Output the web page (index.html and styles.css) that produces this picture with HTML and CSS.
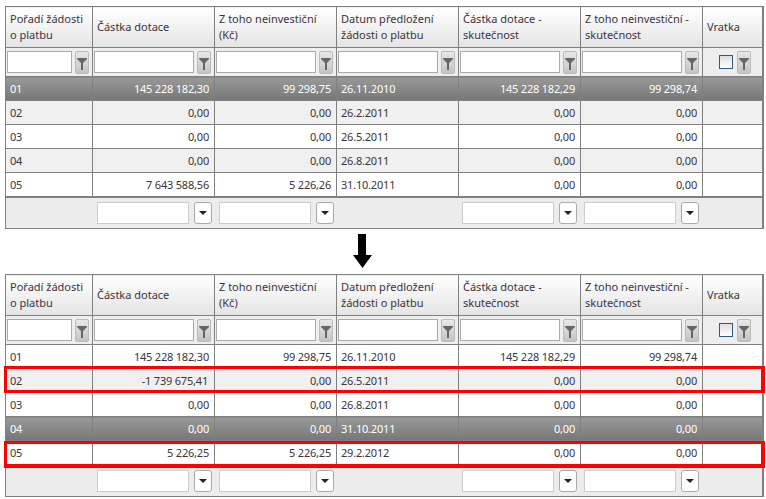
FILE: index.html
```html
<!DOCTYPE HTML>
<html lang=cs>
	<head>
		<meta charset="UTF-8">
		<title>Žádosti o platbu</title>
		<link rel="stylesheet" href="styles.css">
	</head>
	<body>
		<table class="grid">
			<colgroup><col class=c1><col class=c2><col class=c2><col class=c2><col class=c2><col class=c2><col class=c7></colgroup>
			<thead>
				<tr>
					<th>Pořadí žádosti o platbu</th>
					<th>Částka dotace</th>
					<th>Z toho neinvestiční (Kč)</th>
					<th>Datum předložení žádosti o platbu</th>
					<th>Částka dotace - skutečnost</th>
					<th>Z toho neinvestiční - skutečnost</th>
					<th>Vratka</th>
				</tr>
				<tr class="filters">
					<td><div class=filter><input><button class=funnel><svg viewBox="0 0 12 21"><path d="M1 6h10v1L7 11v7H5v-7L1 7z"/></svg></button></div></td>
					<td><div class=filter><input><button class=funnel><svg viewBox="0 0 12 21"><path d="M1 6h10v1L7 11v7H5v-7L1 7z"/></svg></button></div></td>
					<td><div class=filter><input><button class=funnel><svg viewBox="0 0 12 21"><path d="M1 6h10v1L7 11v7H5v-7L1 7z"/></svg></button></div></td>
					<td><div class=filter><input><button class=funnel><svg viewBox="0 0 12 21"><path d="M1 6h10v1L7 11v7H5v-7L1 7z"/></svg></button></div></td>
					<td><div class=filter><input><button class=funnel><svg viewBox="0 0 12 21"><path d="M1 6h10v1L7 11v7H5v-7L1 7z"/></svg></button></div></td>
					<td><div class=filter><input><button class=funnel><svg viewBox="0 0 12 21"><path d="M1 6h10v1L7 11v7H5v-7L1 7z"/></svg></button></div></td>
					<td><div class="filter center"><span class=check></span><button class=funnel><svg viewBox="0 0 12 21"><path d="M1 6h10v1L7 11v7H5v-7L1 7z"/></svg></button></div></td>
				</tr>
			</thead>
			<tbody>
				<tr class=selected><td>01</td><td>145 228 182,30</td><td>99 298,75</td><td>26.11.2010</td><td>145 228 182,29</td><td>99 298,74</td><td></td></tr>
				<tr class=alt><td>02</td><td>0,00</td><td>0,00</td><td>26.2.2011</td><td>0,00</td><td>0,00</td><td></td></tr>
				<tr><td>03</td><td>0,00</td><td>0,00</td><td>26.5.2011</td><td>0,00</td><td>0,00</td><td></td></tr>
				<tr class=alt><td>04</td><td>0,00</td><td>0,00</td><td>26.8.2011</td><td>0,00</td><td>0,00</td><td></td></tr>
				<tr><td>05</td><td>7 643 588,56</td><td>5 226,26</td><td>31.10.2011</td><td>0,00</td><td>0,00</td><td></td></tr>
			</tbody>
			<tfoot>
				<tr>
					<td></td>
					<td><div class=combo><input><button class=drop><i></i></button></div></td>
					<td><div class=combo><input><button class=drop><i></i></button></div></td>
					<td></td>
					<td><div class="combo tight"><input><button class=drop><i></i></button></div></td>
					<td><div class="combo tight"><input><button class=drop><i></i></button></div></td>
					<td></td>
				</tr>
			</tfoot>
		</table>

		<div class="arrow">
			<svg width=19 height=34 viewBox="0 0 19 34"><path d="M5 0h8v21h6l-9.500 13L0 21h5z"/></svg>
		</div>

		<div class="after">
			<table class="grid">
				<colgroup><col class=c1><col class=c2><col class=c2><col class=c2><col class=c2><col class=c2><col class=c7></colgroup>
				<thead>
					<tr>
						<th>Pořadí žádosti o platbu</th>
						<th>Částka dotace</th>
						<th>Z toho neinvestiční (Kč)</th>
						<th>Datum předložení žádosti o platbu</th>
						<th>Částka dotace - skutečnost</th>
						<th>Z toho neinvestiční - skutečnost</th>
						<th>Vratka</th>
					</tr>
					<tr class="filters">
						<td><div class=filter><input><button class=funnel><svg viewBox="0 0 12 21"><path d="M1 6h10v1L7 11v7H5v-7L1 7z"/></svg></button></div></td>
						<td><div class=filter><input><button class=funnel><svg viewBox="0 0 12 21"><path d="M1 6h10v1L7 11v7H5v-7L1 7z"/></svg></button></div></td>
						<td><div class=filter><input><button class=funnel><svg viewBox="0 0 12 21"><path d="M1 6h10v1L7 11v7H5v-7L1 7z"/></svg></button></div></td>
						<td><div class=filter><input><button class=funnel><svg viewBox="0 0 12 21"><path d="M1 6h10v1L7 11v7H5v-7L1 7z"/></svg></button></div></td>
						<td><div class=filter><input><button class=funnel><svg viewBox="0 0 12 21"><path d="M1 6h10v1L7 11v7H5v-7L1 7z"/></svg></button></div></td>
						<td><div class=filter><input><button class=funnel><svg viewBox="0 0 12 21"><path d="M1 6h10v1L7 11v7H5v-7L1 7z"/></svg></button></div></td>
						<td><div class="filter center"><span class=check></span><button class=funnel><svg viewBox="0 0 12 21"><path d="M1 6h10v1L7 11v7H5v-7L1 7z"/></svg></button></div></td>
					</tr>
				</thead>
				<tbody>
					<tr><td>01</td><td>145 228 182,30</td><td>99 298,75</td><td>26.11.2010</td><td>145 228 182,29</td><td>99 298,74</td><td></td></tr>
					<tr class=alt><td>02</td><td class=shifted>-1 739 675,41</td><td>0,00</td><td>26.5.2011</td><td>0,00</td><td>0,00</td><td></td></tr>
					<tr><td>03</td><td>0,00</td><td>0,00</td><td>26.8.2011</td><td>0,00</td><td>0,00</td><td></td></tr>
					<tr class=selected><td>04</td><td>0,00</td><td>0,00</td><td>31.10.2011</td><td>0,00</td><td>0,00</td><td></td></tr>
					<tr><td>05</td><td>5 226,25</td><td>5 226,25</td><td>29.2.2012</td><td>0,00</td><td>0,00</td><td></td></tr>
				</tbody>
				<tfoot>
					<tr>
						<td></td>
						<td><div class=combo><input><button class=drop><i></i></button></div></td>
						<td><div class=combo><input><button class=drop><i></i></button></div></td>
						<td></td>
						<td><div class="combo tight"><input><button class=drop><i></i></button></div></td>
						<td><div class="combo tight"><input><button class=drop><i></i></button></div></td>
						<td></td>
					</tr>
				</tfoot>
			</table>
			<div class="mark mark-02"></div>
			<div class="mark mark-05"></div>
		</div>
	</body>
</html>
```

FILE: styles.css
```css
html {
	font-family: "Noto Sans", sans-serif;
	font-size: 11px;
}
body {
	margin: 0;
	padding: 6px 0 0 5px;
	width: 761px;
	color: #3a3440;
}

/* grid */
.grid {
	border-collapse: collapse;
	table-layout: fixed;
	width: 757px;
	background: #fff;
}
.c1 { width: 87px; }
.c2 { width: 122px; }
.c7 { width: 60px; }

.grid th, .grid td {
	border: solid 1px #808080;
	padding: 0 4px;
}
.grid th:last-child, .grid td:last-child { border-right: solid 2px #808080; }
.grid th {
	height: 40px;
	text-align: left;
	font-weight: normal;
	line-height: 16px;
	background: linear-gradient(#fff, #e4e4e4);
}

.grid tbody td {
	height: 23px;
	padding-right: 5px;
	text-align: right;
	white-space: nowrap;
	letter-spacing: -0.2px;
}
.grid tbody td:first-child, .grid tbody td:nth-child(4) { text-align: left; }
.grid tbody .shifted { padding-right: 6px; }
.alt td { background: #f0f0f0; }
.selected td {
	background: linear-gradient(#999, #777);
	color: #fff;
}

/* filter row */
.grid .filters td {
	height: 28px;
	padding: 0 3px 0 1px;
	background: #eee;
}
.filter {
	display: flex;
	align-items: center;
	gap: 3px;
}
.filter input {
	flex: 1;
	min-width: 0;
	height: 22px;
	box-sizing: border-box;
	border: solid 1px #aaa;
	background: #fff;
	padding: 0;
}
.funnel {
	flex: none;
	width: 14px;
	height: 23px;
	padding: 0;
	border: solid 1px #bbb;
	border-radius: 2px;
	background: linear-gradient(#e8e8e8, #c4c4c4);
}
.funnel svg {
	display: block;
	width: 12px;
	height: 21px;
	fill: #666;
}
.center { justify-content: flex-end; gap: 4px; padding-right: 8px; }
.check {
	width: 12px;
	height: 12px;
	border: solid 1px #2f5a85;
	background: linear-gradient(#dedede, #fff);
}

/* footer */
.grid tfoot td {
	height: 30px;
	padding: 0;
	background: #ececec;
	border-left: none;
	border-right: none;
	border-top: solid 2px #808080;
}
.grid tfoot td:first-child { border-left: solid 1px #808080; }
.grid tfoot td:last-child { border-right: solid 2px #808080; }
.combo {
	display: flex;
	align-items: center;
	gap: 5px;
	padding: 0 3px 0 4px;
}
.combo.tight { padding: 0 4px 0 3px; }
.combo input {
	flex: 1;
	min-width: 0;
	height: 22px;
	box-sizing: border-box;
	border: solid 1px #ccc;
	background: #fff;
	padding: 0;
}
.drop {
	flex: none;
	display: flex;
	align-items: center;
	justify-content: center;
	width: 18px;
	height: 22px;
	padding: 0;
	border: solid 1px #aaa;
	border-radius: 3px;
	background: #fff;
}
.drop i {
	border: solid 4px transparent;
	border-top: solid 4px #222;
	border-bottom: none;
}

/* arrow between the two grids */
.arrow {
	display: flex;
	justify-content: center;
	padding: 5px 0 6px 0;
	width: 715px;
}
.arrow svg { display: block; fill: #000; }

/* red highlights */
.after { position: relative; }
.mark {
	position: absolute;
	left: -1px;
	width: 761px;
	height: 27px;
	box-sizing: border-box;
	border: solid #f00;
	border-width: 3px 4px 3px 3px;
}
.mark-02 { top: 92px; }
.mark-05 { top: 167px; border-bottom-width: 4px; }
```
